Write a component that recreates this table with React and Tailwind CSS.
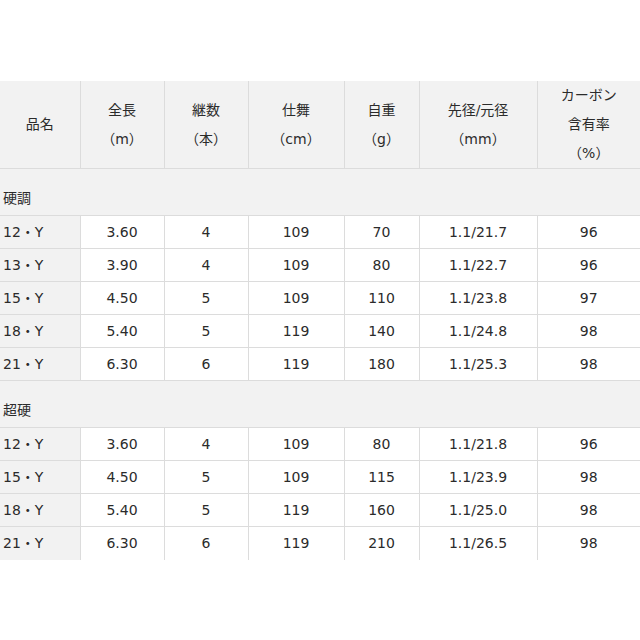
import React from 'react';

const font = { fontFamily: '"DejaVu Sans", "Noto Sans CJK JP", sans-serif' };

const headers = [
  ['品名'],
  ['全長', '（m）'],
  ['継数', '（本）'],
  ['仕舞', '（cm）'],
  ['自重', '（g）'],
  ['先径/元径', '（mm）'],
  ['カーボン', '含有率', '（%）'],
];

const sections = [
  {
    label: '硬調',
    rows: [
      ['12・Y', '3.60', '4', '109', '70', '1.1/21.7', '96'],
      ['13・Y', '3.90', '4', '109', '80', '1.1/22.7', '96'],
      ['15・Y', '4.50', '5', '109', '110', '1.1/23.8', '97'],
      ['18・Y', '5.40', '5', '119', '140', '1.1/24.8', '98'],
      ['21・Y', '6.30', '6', '119', '180', '1.1/25.3', '98'],
    ],
  },
  {
    label: '超硬',
    rows: [
      ['12・Y', '3.60', '4', '109', '80', '1.1/21.8', '96'],
      ['15・Y', '4.50', '5', '109', '115', '1.1/23.9', '98'],
      ['18・Y', '5.40', '5', '119', '160', '1.1/25.0', '98'],
      ['21・Y', '6.30', '6', '119', '210', '1.1/26.5', '98'],
    ],
  },
];

const widths = ['w-[80px]', 'w-[84px]', 'w-[84px]', 'w-[96px]', 'w-[75px]', 'w-[118px]', 'w-[103px]'];

export default function App() {
  return (
    <div className="w-[640px] h-[640px] bg-white overflow-hidden pt-[81px] text-[#2b2b2b] text-[14px]" style={font}>
      <table className="table-fixed border-collapse w-[640px]">
        <colgroup>
          {widths.map((w, i) => (
            <col key={i} className={w} />
          ))}
        </colgroup>
        <thead>
          <tr className="h-[87px] bg-[#f2f2f2]">
            {headers.map((lines, i) => (
              <th
                key={i}
                className="font-normal text-center align-middle leading-[29px] border-b border-r border-[#dcdcdc] last:border-r-0"
              >
                {lines.map((l, j) => (
                  <div key={j}>{l}</div>
                ))}
              </th>
            ))}
          </tr>
        </thead>
        <tbody>
          {sections.map((sec, si) => (
            <React.Fragment key={sec.label}>
              <tr className="h-[47px] bg-[#f2f2f2]">
                <td colSpan={7} className="align-bottom pb-[6px] pl-[3px] border-b border-[#dcdcdc]">
                  {sec.label}
                </td>
              </tr>
              {sec.rows.map((r, ri) => {
                const last = si === sections.length - 1 && ri === sec.rows.length - 1;
                return (
                  <tr key={ri} className="h-[33px]">
                    {r.map((c, ci) => (
                      <td
                        key={ci}
                        className={
                          (ci === 0
                            ? 'bg-[#f2f2f2] pl-[3px] text-left border-r border-[#dcdcdc]'
                            : 'bg-white text-center border-r border-[#dcdcdc] last:border-r-0') +
                          (last ? '' : ' border-b')
                        }
                      >
                        {c}
                      </td>
                    ))}
                  </tr>
                );
              })}
            </React.Fragment>
          ))}
        </tbody>
      </table>
    </div>
  );
}
